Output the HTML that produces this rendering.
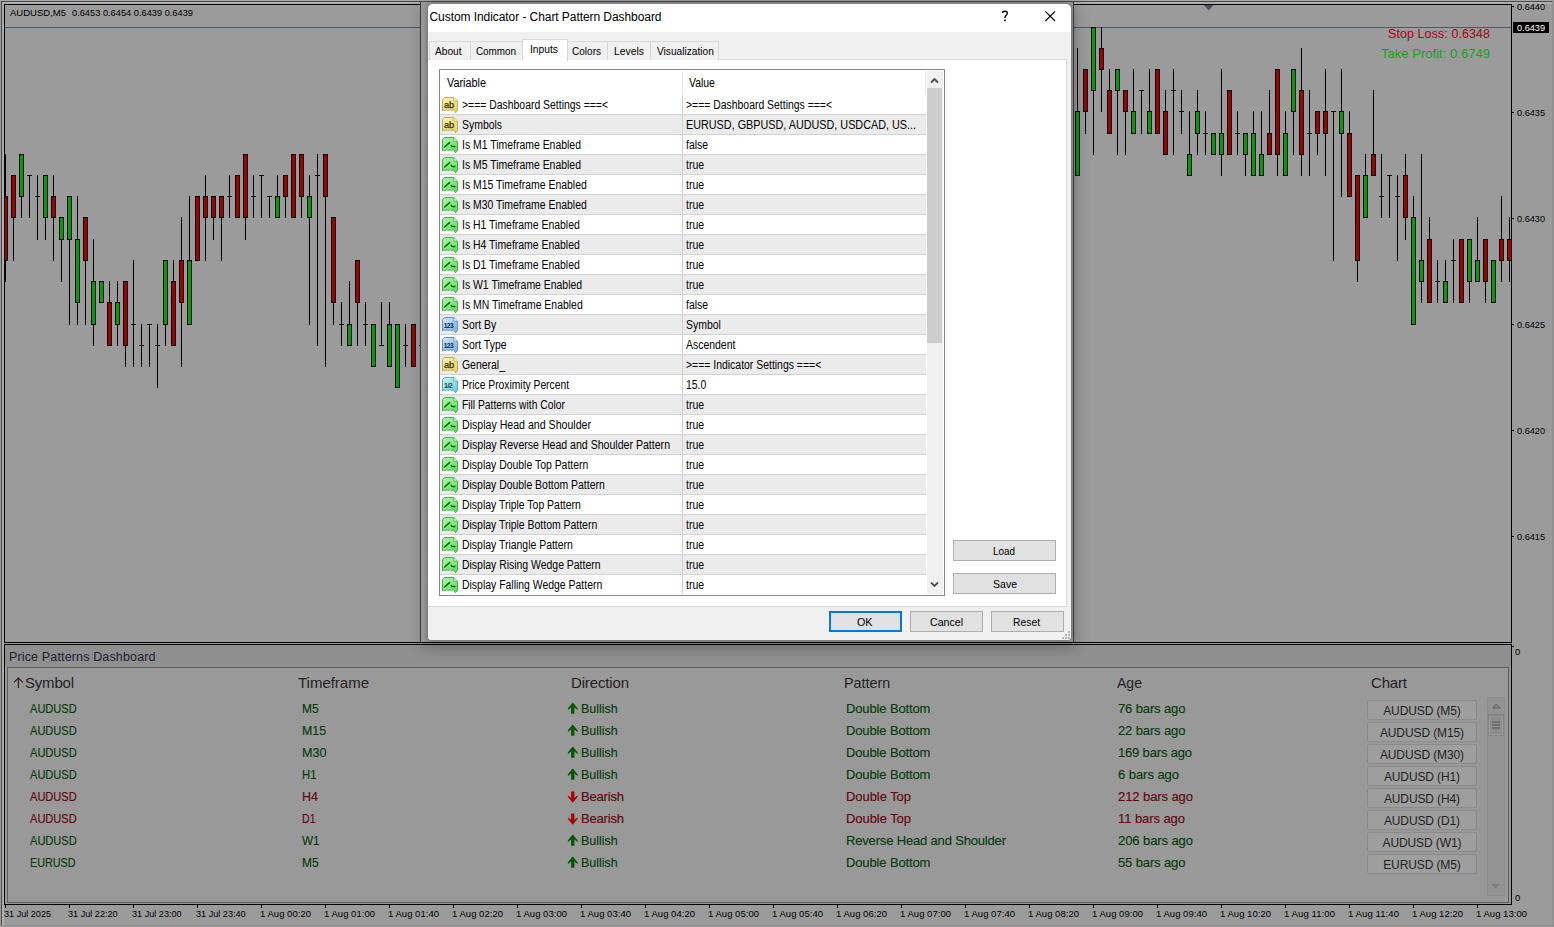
<!DOCTYPE html>
<html><head><meta charset="utf-8"><style>
html,body{margin:0;padding:0}
body{width:1554px;height:927px;overflow:hidden;position:relative;background:#9b9b9b;font-family:"Liberation Sans",sans-serif}
.abs{position:absolute}
.t{position:absolute;white-space:pre}
.ic{position:absolute}
</style></head><body>
<svg width="0" height="0" style="position:absolute"><defs><linearGradient id="gab" x1="0" y1="0" x2="0.8" y2="1"><stop offset="0" stop-color="#fbf4b8"/><stop offset="1" stop-color="#e4d26c"/></linearGradient><linearGradient id="gbool" x1="0" y1="0" x2="0.8" y2="1"><stop offset="0" stop-color="#b6f5b6"/><stop offset="1" stop-color="#5cdc5c"/></linearGradient><linearGradient id="gnum" x1="0" y1="0" x2="0.8" y2="1"><stop offset="0" stop-color="#d4e9fb"/><stop offset="1" stop-color="#7db2e6"/></linearGradient><linearGradient id="ghalf" x1="0" y1="0" x2="0.8" y2="1"><stop offset="0" stop-color="#d2f4f8"/><stop offset="1" stop-color="#70ccd8"/></linearGradient></defs></svg>
<!-- outer frame -->
<div class="abs" style="left:0;top:0;width:1554px;height:1px;background:#a8a8a8"></div>
<div class="abs" style="left:1px;top:1px;width:1551px;height:1px;background:#4a4a4a"></div>
<div class="abs" style="left:1px;top:1px;width:1px;height:924px;background:#4a4a4a"></div>
<div class="abs" style="left:2px;top:2px;width:1550px;height:2px;background:#adadad"></div>
<div class="abs" style="left:2px;top:2px;width:2px;height:923px;background:#adadad"></div>
<div class="abs" style="left:0;top:925px;width:1554px;height:1px;background:#8e8e8e"></div>
<div class="abs" style="left:1552px;top:0;width:1px;height:927px;background:#8e8e8e"></div>

<!-- main chart border -->
<div class="abs" style="left:4px;top:4px;width:1506px;height:637px;border:1px solid #000"></div>
<div class="abs" style="left:5px;top:27px;width:1506px;height:1px;background:#4d5864"></div>
<svg class="abs" style="left:1204px;top:5px" width="10" height="6"><path d="M0 0 L9.5 0 L4.75 5.5 Z" fill="#4a535c"/></svg>
<svg class="abs" style="left:0;top:0" width="1554" height="927"><defs><clipPath id="cc"><rect x="5" y="5" width="1506" height="637"/></clipPath></defs><g clip-path="url(#cc)" fill="#000"><rect x="5" y="154" width="1" height="128"/><rect x="3" y="196" width="5" height="65"/><rect x="4" y="197" width="3" height="63" fill="#a00000"/><rect x="13" y="175" width="1" height="86"/><rect x="11" y="175" width="5" height="43"/><rect x="12" y="176" width="3" height="41" fill="#a00000"/><rect x="21" y="154" width="1" height="64"/><rect x="19" y="154" width="5" height="43"/><rect x="20" y="155" width="3" height="41" fill="#00a000"/><rect x="29" y="175" width="1" height="43"/><rect x="27" y="175" width="5" height="1"/><rect x="37" y="175" width="1" height="65"/><rect x="35" y="196" width="5" height="1"/><rect x="45" y="175" width="1" height="65"/><rect x="43" y="175" width="5" height="43"/><rect x="44" y="176" width="3" height="41" fill="#00a000"/><rect x="53" y="175" width="1" height="86"/><rect x="51" y="196" width="5" height="22"/><rect x="52" y="197" width="3" height="20" fill="#a00000"/><rect x="61" y="217" width="1" height="65"/><rect x="59" y="217" width="5" height="23"/><rect x="60" y="218" width="3" height="21" fill="#00a000"/><rect x="69" y="196" width="1" height="129"/><rect x="67" y="196" width="5" height="44"/><rect x="68" y="197" width="3" height="42" fill="#00a000"/><rect x="77" y="196" width="1" height="129"/><rect x="75" y="239" width="5" height="64"/><rect x="76" y="240" width="3" height="62" fill="#00a000"/><rect x="85" y="217" width="1" height="108"/><rect x="83" y="217" width="5" height="44"/><rect x="84" y="218" width="3" height="42" fill="#a00000"/><rect x="93" y="239" width="1" height="107"/><rect x="91" y="281" width="5" height="44"/><rect x="92" y="282" width="3" height="42" fill="#00a000"/><rect x="101" y="281" width="1" height="22"/><rect x="99" y="281" width="5" height="22"/><rect x="100" y="282" width="3" height="20" fill="#00a000"/><rect x="109" y="281" width="1" height="65"/><rect x="107" y="302" width="5" height="44"/><rect x="108" y="303" width="3" height="42" fill="#a00000"/><rect x="117" y="281" width="1" height="65"/><rect x="115" y="302" width="5" height="23"/><rect x="116" y="303" width="3" height="21" fill="#00a000"/><rect x="125" y="281" width="1" height="86"/><rect x="123" y="281" width="5" height="65"/><rect x="124" y="282" width="3" height="63" fill="#a00000"/><rect x="133" y="260" width="1" height="107"/><rect x="131" y="324" width="5" height="1"/><rect x="141" y="324" width="1" height="43"/><rect x="139" y="345" width="5" height="1"/><rect x="149" y="324" width="1" height="43"/><rect x="147" y="324" width="5" height="1"/><rect x="157" y="324" width="1" height="64"/><rect x="155" y="345" width="5" height="1"/><rect x="165" y="260" width="1" height="86"/><rect x="163" y="260" width="5" height="65"/><rect x="164" y="261" width="3" height="63" fill="#00a000"/><rect x="173" y="260" width="1" height="86"/><rect x="171" y="281" width="5" height="65"/><rect x="172" y="282" width="3" height="63" fill="#a00000"/><rect x="181" y="217" width="1" height="150"/><rect x="179" y="260" width="5" height="43"/><rect x="180" y="261" width="3" height="41" fill="#a00000"/><rect x="189" y="196" width="1" height="129"/><rect x="187" y="260" width="5" height="65"/><rect x="188" y="261" width="3" height="63" fill="#00a000"/><rect x="197" y="196" width="1" height="65"/><rect x="195" y="196" width="5" height="65"/><rect x="196" y="197" width="3" height="63" fill="#a00000"/><rect x="205" y="175" width="1" height="86"/><rect x="203" y="196" width="5" height="22"/><rect x="204" y="197" width="3" height="20" fill="#a00000"/><rect x="213" y="196" width="1" height="44"/><rect x="211" y="196" width="5" height="22"/><rect x="212" y="197" width="3" height="20" fill="#a00000"/><rect x="221" y="196" width="1" height="65"/><rect x="219" y="196" width="5" height="22"/><rect x="220" y="197" width="3" height="20" fill="#a00000"/><rect x="229" y="175" width="1" height="43"/><rect x="227" y="196" width="5" height="1"/><rect x="237" y="175" width="1" height="43"/><rect x="235" y="175" width="5" height="43"/><rect x="236" y="176" width="3" height="41" fill="#a00000"/><rect x="245" y="154" width="1" height="86"/><rect x="243" y="154" width="5" height="64"/><rect x="244" y="155" width="3" height="62" fill="#a00000"/><rect x="253" y="175" width="1" height="43"/><rect x="251" y="196" width="5" height="1"/><rect x="261" y="175" width="1" height="43"/><rect x="259" y="175" width="5" height="1"/><rect x="269" y="196" width="1" height="22"/><rect x="267" y="196" width="5" height="1"/><rect x="277" y="175" width="1" height="43"/><rect x="275" y="196" width="5" height="22"/><rect x="276" y="197" width="3" height="20" fill="#00a000"/><rect x="285" y="175" width="1" height="43"/><rect x="283" y="175" width="5" height="22"/><rect x="284" y="176" width="3" height="20" fill="#a00000"/><rect x="293" y="154" width="1" height="64"/><rect x="291" y="154" width="5" height="64"/><rect x="292" y="155" width="3" height="62" fill="#a00000"/><rect x="301" y="154" width="1" height="64"/><rect x="299" y="154" width="5" height="43"/><rect x="300" y="155" width="3" height="41" fill="#a00000"/><rect x="309" y="175" width="1" height="150"/><rect x="307" y="196" width="5" height="22"/><rect x="308" y="197" width="3" height="20" fill="#00a000"/><rect x="317" y="154" width="1" height="192"/><rect x="315" y="175" width="5" height="1"/><rect x="325" y="154" width="1" height="213"/><rect x="323" y="154" width="5" height="43"/><rect x="324" y="155" width="3" height="41" fill="#a00000"/><rect x="333" y="217" width="1" height="108"/><rect x="331" y="217" width="5" height="86"/><rect x="332" y="218" width="3" height="84" fill="#a00000"/><rect x="341" y="302" width="1" height="44"/><rect x="339" y="324" width="5" height="1"/><rect x="349" y="281" width="1" height="65"/><rect x="347" y="324" width="5" height="22"/><rect x="348" y="325" width="3" height="20" fill="#00a000"/><rect x="357" y="260" width="1" height="86"/><rect x="355" y="260" width="5" height="43"/><rect x="356" y="261" width="3" height="41" fill="#a00000"/><rect x="365" y="302" width="1" height="44"/><rect x="363" y="324" width="5" height="1"/><rect x="373" y="324" width="1" height="43"/><rect x="371" y="324" width="5" height="43"/><rect x="372" y="325" width="3" height="41" fill="#00a000"/><rect x="381" y="302" width="1" height="44"/><rect x="379" y="345" width="5" height="1"/><rect x="389" y="302" width="1" height="65"/><rect x="387" y="324" width="5" height="43"/><rect x="388" y="325" width="3" height="41" fill="#00a000"/><rect x="397" y="324" width="1" height="64"/><rect x="395" y="324" width="5" height="64"/><rect x="396" y="325" width="3" height="62" fill="#00a000"/><rect x="405" y="324" width="1" height="43"/><rect x="403" y="345" width="5" height="1"/><rect x="413" y="324" width="1" height="43"/><rect x="411" y="324" width="5" height="43"/><rect x="412" y="325" width="3" height="41" fill="#a00000"/><rect x="421" y="324" width="1" height="43"/><rect x="419" y="345" width="5" height="1"/><rect x="1077" y="48" width="1" height="128"/><rect x="1075" y="111" width="5" height="65"/><rect x="1076" y="112" width="3" height="63" fill="#00a000"/><rect x="1085" y="69" width="1" height="65"/><rect x="1083" y="69" width="5" height="43"/><rect x="1084" y="70" width="3" height="41" fill="#a00000"/><rect x="1093" y="27" width="1" height="128"/><rect x="1091" y="27" width="5" height="64"/><rect x="1092" y="28" width="3" height="62" fill="#00a000"/><rect x="1101" y="27" width="1" height="85"/><rect x="1099" y="48" width="5" height="22"/><rect x="1100" y="49" width="3" height="20" fill="#a00000"/><rect x="1109" y="69" width="1" height="65"/><rect x="1107" y="90" width="5" height="44"/><rect x="1108" y="91" width="3" height="42" fill="#a00000"/><rect x="1117" y="69" width="1" height="86"/><rect x="1115" y="69" width="5" height="22"/><rect x="1116" y="70" width="3" height="20" fill="#00a000"/><rect x="1125" y="90" width="1" height="65"/><rect x="1123" y="90" width="5" height="22"/><rect x="1124" y="91" width="3" height="20" fill="#a00000"/><rect x="1133" y="69" width="1" height="65"/><rect x="1131" y="111" width="5" height="23"/><rect x="1132" y="112" width="3" height="21" fill="#00a000"/><rect x="1141" y="90" width="1" height="44"/><rect x="1139" y="90" width="5" height="1"/><rect x="1149" y="69" width="1" height="65"/><rect x="1147" y="111" width="5" height="23"/><rect x="1148" y="112" width="3" height="21" fill="#00a000"/><rect x="1157" y="69" width="1" height="65"/><rect x="1155" y="69" width="5" height="65"/><rect x="1156" y="70" width="3" height="63" fill="#a00000"/><rect x="1165" y="90" width="1" height="65"/><rect x="1163" y="111" width="5" height="44"/><rect x="1164" y="112" width="3" height="42" fill="#a00000"/><rect x="1173" y="69" width="1" height="86"/><rect x="1171" y="90" width="5" height="1"/><rect x="1181" y="90" width="1" height="44"/><rect x="1179" y="111" width="5" height="1"/><rect x="1189" y="111" width="1" height="65"/><rect x="1187" y="154" width="5" height="22"/><rect x="1188" y="155" width="3" height="20" fill="#00a000"/><rect x="1197" y="90" width="1" height="65"/><rect x="1195" y="111" width="5" height="23"/><rect x="1196" y="112" width="3" height="21" fill="#00a000"/><rect x="1205" y="111" width="1" height="44"/><rect x="1203" y="133" width="5" height="1"/><rect x="1213" y="133" width="1" height="22"/><rect x="1211" y="133" width="5" height="22"/><rect x="1212" y="134" width="3" height="20" fill="#00a000"/><rect x="1221" y="69" width="1" height="107"/><rect x="1219" y="133" width="5" height="22"/><rect x="1220" y="134" width="3" height="20" fill="#00a000"/><rect x="1229" y="90" width="1" height="65"/><rect x="1227" y="90" width="5" height="65"/><rect x="1228" y="91" width="3" height="63" fill="#a00000"/><rect x="1237" y="111" width="1" height="44"/><rect x="1235" y="133" width="5" height="1"/><rect x="1245" y="133" width="1" height="43"/><rect x="1243" y="133" width="5" height="22"/><rect x="1244" y="134" width="3" height="20" fill="#00a000"/><rect x="1253" y="111" width="1" height="65"/><rect x="1251" y="133" width="5" height="43"/><rect x="1252" y="134" width="3" height="41" fill="#00a000"/><rect x="1261" y="111" width="1" height="65"/><rect x="1259" y="154" width="5" height="22"/><rect x="1260" y="155" width="3" height="20" fill="#00a000"/><rect x="1269" y="90" width="1" height="65"/><rect x="1267" y="133" width="5" height="22"/><rect x="1268" y="134" width="3" height="20" fill="#a00000"/><rect x="1277" y="69" width="1" height="107"/><rect x="1275" y="69" width="5" height="86"/><rect x="1276" y="70" width="3" height="84" fill="#a00000"/><rect x="1285" y="111" width="1" height="65"/><rect x="1283" y="133" width="5" height="43"/><rect x="1284" y="134" width="3" height="41" fill="#00a000"/><rect x="1293" y="69" width="1" height="86"/><rect x="1291" y="69" width="5" height="43"/><rect x="1292" y="70" width="3" height="41" fill="#00a000"/><rect x="1301" y="48" width="1" height="128"/><rect x="1299" y="90" width="5" height="65"/><rect x="1300" y="91" width="3" height="63" fill="#a00000"/><rect x="1309" y="90" width="1" height="86"/><rect x="1307" y="133" width="5" height="1"/><rect x="1317" y="111" width="1" height="44"/><rect x="1315" y="111" width="5" height="23"/><rect x="1316" y="112" width="3" height="21" fill="#a00000"/><rect x="1325" y="69" width="1" height="107"/><rect x="1323" y="111" width="5" height="23"/><rect x="1324" y="112" width="3" height="21" fill="#a00000"/><rect x="1333" y="111" width="1" height="150"/><rect x="1331" y="111" width="5" height="1"/><rect x="1341" y="69" width="1" height="128"/><rect x="1339" y="111" width="5" height="23"/><rect x="1340" y="112" width="3" height="21" fill="#00a000"/><rect x="1349" y="111" width="1" height="86"/><rect x="1347" y="133" width="5" height="64"/><rect x="1348" y="134" width="3" height="62" fill="#a00000"/><rect x="1357" y="175" width="1" height="107"/><rect x="1355" y="175" width="5" height="86"/><rect x="1356" y="176" width="3" height="84" fill="#a00000"/><rect x="1365" y="154" width="1" height="64"/><rect x="1363" y="175" width="5" height="43"/><rect x="1364" y="176" width="3" height="41" fill="#00a000"/><rect x="1373" y="90" width="1" height="86"/><rect x="1371" y="154" width="5" height="22"/><rect x="1372" y="155" width="3" height="20" fill="#a00000"/><rect x="1381" y="154" width="1" height="64"/><rect x="1379" y="196" width="5" height="1"/><rect x="1389" y="175" width="1" height="43"/><rect x="1387" y="175" width="5" height="1"/><rect x="1397" y="175" width="1" height="86"/><rect x="1395" y="196" width="5" height="1"/><rect x="1405" y="154" width="1" height="86"/><rect x="1403" y="175" width="5" height="43"/><rect x="1404" y="176" width="3" height="41" fill="#a00000"/><rect x="1413" y="196" width="1" height="129"/><rect x="1411" y="217" width="5" height="108"/><rect x="1412" y="218" width="3" height="106" fill="#00a000"/><rect x="1421" y="154" width="1" height="149"/><rect x="1419" y="260" width="5" height="22"/><rect x="1420" y="261" width="3" height="20" fill="#00a000"/><rect x="1429" y="217" width="1" height="86"/><rect x="1427" y="239" width="5" height="64"/><rect x="1428" y="240" width="3" height="62" fill="#a00000"/><rect x="1437" y="260" width="1" height="43"/><rect x="1435" y="281" width="5" height="1"/><rect x="1445" y="260" width="1" height="43"/><rect x="1443" y="281" width="5" height="22"/><rect x="1444" y="282" width="3" height="20" fill="#00a000"/><rect x="1453" y="239" width="1" height="64"/><rect x="1451" y="260" width="5" height="1"/><rect x="1461" y="239" width="1" height="64"/><rect x="1459" y="239" width="5" height="64"/><rect x="1460" y="240" width="3" height="62" fill="#a00000"/><rect x="1469" y="239" width="1" height="64"/><rect x="1467" y="239" width="5" height="43"/><rect x="1468" y="240" width="3" height="41" fill="#00a000"/><rect x="1477" y="217" width="1" height="65"/><rect x="1475" y="260" width="5" height="22"/><rect x="1476" y="261" width="3" height="20" fill="#00a000"/><rect x="1485" y="239" width="1" height="64"/><rect x="1483" y="239" width="5" height="43"/><rect x="1484" y="240" width="3" height="41" fill="#a00000"/><rect x="1493" y="260" width="1" height="43"/><rect x="1491" y="260" width="5" height="43"/><rect x="1492" y="261" width="3" height="41" fill="#00a000"/><rect x="1501" y="196" width="1" height="86"/><rect x="1499" y="239" width="5" height="22"/><rect x="1500" y="240" width="3" height="20" fill="#a00000"/><rect x="1509" y="217" width="1" height="65"/><rect x="1507" y="239" width="5" height="22"/><rect x="1508" y="240" width="3" height="20" fill="#a00000"/></g></svg>

<div class="t " style="left:10.00px;top:6.60px;font-size:9.8px;line-height:12px;letter-spacing:0.000px;color:#000;transform:scaleX(0.9702);transform-origin:0 0;">AUDUSD,M5</div>
<div class="t " style="left:72.00px;top:6.60px;font-size:9.8px;line-height:12px;letter-spacing:0.000px;color:#000;transform:scaleX(0.9448);transform-origin:0 0;">0.6453 0.6454 0.6439 0.6439</div>
<div class="t " style="left:1388.00px;top:27.17px;font-size:12.5px;line-height:15px;letter-spacing:0.077px;color:#ad0014;">Stop Loss: 0.6348</div>
<div class="t " style="left:1381.00px;top:47.17px;font-size:12.5px;line-height:15px;letter-spacing:0.000px;color:#1aa01a;transform:scaleX(1.0458);transform-origin:0 0;">Take Profit: 0.6749</div>

<!-- price axis -->
<div class="abs" style="left:1512px;top:6px;width:2px;height:1px;background:#000"></div><div class="t ax" style="left:1517.00px;top:0.71px;font-size:9.5px;line-height:12px;letter-spacing:0.000px;color:#000;transform:scaleX(0.9636);transform-origin:0 0;">0.6440</div><div class="abs" style="left:1512px;top:112px;width:2px;height:1px;background:#000"></div><div class="t ax" style="left:1517.00px;top:106.71px;font-size:9.5px;line-height:12px;letter-spacing:0.000px;color:#000;transform:scaleX(0.9636);transform-origin:0 0;">0.6435</div><div class="abs" style="left:1512px;top:218px;width:2px;height:1px;background:#000"></div><div class="t ax" style="left:1517.00px;top:212.71px;font-size:9.5px;line-height:12px;letter-spacing:0.000px;color:#000;transform:scaleX(0.9636);transform-origin:0 0;">0.6430</div><div class="abs" style="left:1512px;top:324px;width:2px;height:1px;background:#000"></div><div class="t ax" style="left:1517.00px;top:318.71px;font-size:9.5px;line-height:12px;letter-spacing:0.000px;color:#000;transform:scaleX(0.9636);transform-origin:0 0;">0.6425</div><div class="abs" style="left:1512px;top:430px;width:2px;height:1px;background:#000"></div><div class="t ax" style="left:1517.00px;top:424.71px;font-size:9.5px;line-height:12px;letter-spacing:0.000px;color:#000;transform:scaleX(0.9636);transform-origin:0 0;">0.6420</div><div class="abs" style="left:1512px;top:536px;width:2px;height:1px;background:#000"></div><div class="t ax" style="left:1517.00px;top:530.71px;font-size:9.5px;line-height:12px;letter-spacing:0.000px;color:#000;transform:scaleX(0.9636);transform-origin:0 0;">0.6415</div>
<div class="abs" style="left:1513px;top:22px;width:36px;height:11px;background:#000"></div>
<div class="t " style="left:1517.00px;top:21.71px;font-size:9.5px;line-height:12px;letter-spacing:0.000px;color:#fff;transform:scaleX(0.9636);transform-origin:0 0;">0.6439</div>

<!-- subwindow -->
<div class="abs" style="left:4px;top:644px;width:1506px;height:259px;border:1px solid #000;background:#999"></div>
<div class="abs" style="left:5px;top:645px;width:1506px;height:22px;background:#8f8f8f"></div>
<div class="t " style="left:9.00px;top:649.67px;font-size:12.5px;line-height:15px;letter-spacing:0.147px;color:#221c2c;">Price Patterns Dashboard</div>
<div class="abs" style="left:7px;top:667px;width:1500px;height:234px;border:1px solid #5c5c5c;background:#999"></div>
<svg class="abs" style="left:13px;top:677px" width="11" height="12"><path d="M5.4 11 L5.4 1.2 M1 5.4 L5.4 1 L9.8 5.4" stroke="#2a2020" stroke-width="1.15" fill="none"/></svg>
<div class="t " style="left:25.00px;top:673.80px;font-size:15px;line-height:18px;letter-spacing:-0.203px;color:#261e22;">Symbol</div>
<div class="t " style="left:298.00px;top:673.80px;font-size:15px;line-height:18px;letter-spacing:-0.015px;color:#261e22;">Timeframe</div>
<div class="t " style="left:571.00px;top:673.80px;font-size:15px;line-height:18px;letter-spacing:-0.148px;color:#261e22;">Direction</div>
<div class="t " style="left:844.00px;top:673.80px;font-size:15px;line-height:18px;letter-spacing:0.000px;color:#261e22;transform:scaleX(0.9574);transform-origin:0 0;">Pattern</div>
<div class="t " style="left:1117.00px;top:673.80px;font-size:15px;line-height:18px;letter-spacing:0.000px;color:#261e22;transform:scaleX(0.9367);transform-origin:0 0;">Age</div>
<div class="t " style="left:1371.00px;top:673.80px;font-size:15px;line-height:18px;letter-spacing:-0.170px;color:#261e22;">Chart</div>
<div class="t " style="left:30.00px;top:700.50px;font-size:13px;line-height:16px;letter-spacing:0.000px;color:#083a0c;transform:scaleX(0.8507);transform-origin:0 0;-webkit-text-stroke:0.15px #083a0c">AUDUSD</div><div class="t " style="left:302.00px;top:700.50px;font-size:13px;line-height:16px;letter-spacing:0.000px;color:#083a0c;transform:scaleX(0.9192);transform-origin:0 0;-webkit-text-stroke:0.15px #083a0c">M5</div><div class="t " style="left:581.00px;top:700.50px;font-size:13px;line-height:16px;letter-spacing:0.000px;color:#083a0c;transform:scaleX(0.9583);transform-origin:0 0;-webkit-text-stroke:0.15px #083a0c">Bullish</div><div class="t " style="left:846.00px;top:700.50px;font-size:13px;line-height:16px;letter-spacing:-0.133px;color:#083a0c;-webkit-text-stroke:0.15px #083a0c">Double Bottom</div><div class="t " style="left:1118.00px;top:700.50px;font-size:13px;line-height:16px;letter-spacing:-0.126px;color:#083a0c;-webkit-text-stroke:0.15px #083a0c">76 bars ago</div><svg class="abs" width="12" height="13" style="left:567px;top:702px"><path d="M5.75 0.6 L10.6 6.3 L10.6 8 L7.4 5.6 L7.4 11.8 L4.1 11.8 L4.1 5.6 L0.9 8 L0.9 6.3 Z" fill="#005800"/></svg><div class="abs" style="left:1367px;top:700px;width:108px;height:18px;border:1px solid #8a8a8a;background:#9e9e9e;border-radius:2px"></div><div class="t " style="left:1383.22px;top:704.34px;font-size:12px;line-height:15px;letter-spacing:-0.110px;color:#1e1e22;">AUDUSD (M5)</div><div class="t " style="left:30.00px;top:722.50px;font-size:13px;line-height:16px;letter-spacing:0.000px;color:#083a0c;transform:scaleX(0.8507);transform-origin:0 0;-webkit-text-stroke:0.15px #083a0c">AUDUSD</div><div class="t " style="left:302.00px;top:722.50px;font-size:13px;line-height:16px;letter-spacing:0.000px;color:#083a0c;transform:scaleX(0.9490);transform-origin:0 0;-webkit-text-stroke:0.15px #083a0c">M15</div><div class="t " style="left:581.00px;top:722.50px;font-size:13px;line-height:16px;letter-spacing:0.000px;color:#083a0c;transform:scaleX(0.9583);transform-origin:0 0;-webkit-text-stroke:0.15px #083a0c">Bullish</div><div class="t " style="left:846.00px;top:722.50px;font-size:13px;line-height:16px;letter-spacing:-0.133px;color:#083a0c;-webkit-text-stroke:0.15px #083a0c">Double Bottom</div><div class="t " style="left:1118.00px;top:722.50px;font-size:13px;line-height:16px;letter-spacing:-0.126px;color:#083a0c;-webkit-text-stroke:0.15px #083a0c">22 bars ago</div><svg class="abs" width="12" height="13" style="left:567px;top:724px"><path d="M5.75 0.6 L10.6 6.3 L10.6 8 L7.4 5.6 L7.4 11.8 L4.1 11.8 L4.1 5.6 L0.9 8 L0.9 6.3 Z" fill="#005800"/></svg><div class="abs" style="left:1367px;top:722px;width:108px;height:18px;border:1px solid #8a8a8a;background:#9e9e9e;border-radius:2px"></div><div class="t " style="left:1379.93px;top:726.34px;font-size:12px;line-height:15px;letter-spacing:-0.110px;color:#1e1e22;">AUDUSD (M15)</div><div class="t " style="left:30.00px;top:744.50px;font-size:13px;line-height:16px;letter-spacing:0.000px;color:#083a0c;transform:scaleX(0.8507);transform-origin:0 0;-webkit-text-stroke:0.15px #083a0c">AUDUSD</div><div class="t " style="left:302.00px;top:744.50px;font-size:13px;line-height:16px;letter-spacing:0.000px;color:#083a0c;transform:scaleX(0.9688);transform-origin:0 0;-webkit-text-stroke:0.15px #083a0c">M30</div><div class="t " style="left:581.00px;top:744.50px;font-size:13px;line-height:16px;letter-spacing:0.000px;color:#083a0c;transform:scaleX(0.9583);transform-origin:0 0;-webkit-text-stroke:0.15px #083a0c">Bullish</div><div class="t " style="left:846.00px;top:744.50px;font-size:13px;line-height:16px;letter-spacing:-0.133px;color:#083a0c;-webkit-text-stroke:0.15px #083a0c">Double Bottom</div><div class="t " style="left:1118.00px;top:744.50px;font-size:13px;line-height:16px;letter-spacing:-0.172px;color:#083a0c;-webkit-text-stroke:0.15px #083a0c">169 bars ago</div><svg class="abs" width="12" height="13" style="left:567px;top:746px"><path d="M5.75 0.6 L10.6 6.3 L10.6 8 L7.4 5.6 L7.4 11.8 L4.1 11.8 L4.1 5.6 L0.9 8 L0.9 6.3 Z" fill="#005800"/></svg><div class="abs" style="left:1367px;top:744px;width:108px;height:18px;border:1px solid #8a8a8a;background:#9e9e9e;border-radius:2px"></div><div class="t " style="left:1379.93px;top:748.34px;font-size:12px;line-height:15px;letter-spacing:-0.110px;color:#1e1e22;">AUDUSD (M30)</div><div class="t " style="left:30.00px;top:766.50px;font-size:13px;line-height:16px;letter-spacing:0.000px;color:#083a0c;transform:scaleX(0.8507);transform-origin:0 0;-webkit-text-stroke:0.15px #083a0c">AUDUSD</div><div class="t " style="left:302.00px;top:766.50px;font-size:13px;line-height:16px;letter-spacing:0.000px;color:#083a0c;transform:scaleX(0.8665);transform-origin:0 0;-webkit-text-stroke:0.15px #083a0c">H1</div><div class="t " style="left:581.00px;top:766.50px;font-size:13px;line-height:16px;letter-spacing:0.000px;color:#083a0c;transform:scaleX(0.9583);transform-origin:0 0;-webkit-text-stroke:0.15px #083a0c">Bullish</div><div class="t " style="left:846.00px;top:766.50px;font-size:13px;line-height:16px;letter-spacing:-0.133px;color:#083a0c;-webkit-text-stroke:0.15px #083a0c">Double Bottom</div><div class="t " style="left:1118.00px;top:766.50px;font-size:13px;line-height:16px;letter-spacing:-0.048px;color:#083a0c;-webkit-text-stroke:0.15px #083a0c">6 bars ago</div><svg class="abs" width="12" height="13" style="left:567px;top:768px"><path d="M5.75 0.6 L10.6 6.3 L10.6 8 L7.4 5.6 L7.4 11.8 L4.1 11.8 L4.1 5.6 L0.9 8 L0.9 6.3 Z" fill="#005800"/></svg><div class="abs" style="left:1367px;top:766px;width:108px;height:18px;border:1px solid #8a8a8a;background:#9e9e9e;border-radius:2px"></div><div class="t " style="left:1383.88px;top:770.34px;font-size:12px;line-height:15px;letter-spacing:-0.110px;color:#1e1e22;">AUDUSD (H1)</div><div class="t " style="left:30.00px;top:788.50px;font-size:13px;line-height:16px;letter-spacing:0.000px;color:#600610;transform:scaleX(0.8507);transform-origin:0 0;-webkit-text-stroke:0.15px #600610">AUDUSD</div><div class="t " style="left:302.00px;top:788.50px;font-size:13px;line-height:16px;letter-spacing:0.000px;color:#600610;transform:scaleX(0.9628);transform-origin:0 0;-webkit-text-stroke:0.15px #600610">H4</div><div class="t " style="left:581.00px;top:788.50px;font-size:13px;line-height:16px;letter-spacing:-0.180px;color:#600610;-webkit-text-stroke:0.15px #600610">Bearish</div><div class="t " style="left:846.00px;top:788.50px;font-size:13px;line-height:16px;letter-spacing:-0.059px;color:#600610;-webkit-text-stroke:0.15px #600610">Double Top</div><div class="t " style="left:1118.00px;top:788.50px;font-size:13px;line-height:16px;letter-spacing:-0.081px;color:#600610;-webkit-text-stroke:0.15px #600610">212 bars ago</div><svg class="abs" width="12" height="13" style="left:567px;top:791px"><path d="M5.75 11.8 L10.6 6.1 L10.6 4.4 L7.4 6.8 L7.4 0.6 L4.1 0.6 L4.1 6.8 L0.9 4.4 L0.9 6.1 Z" fill="#a80000"/></svg><div class="abs" style="left:1367px;top:788px;width:108px;height:18px;border:1px solid #8a8a8a;background:#9e9e9e;border-radius:2px"></div><div class="t " style="left:1383.88px;top:792.34px;font-size:12px;line-height:15px;letter-spacing:-0.110px;color:#1e1e22;">AUDUSD (H4)</div><div class="t " style="left:30.00px;top:810.50px;font-size:13px;line-height:16px;letter-spacing:0.000px;color:#600610;transform:scaleX(0.8507);transform-origin:0 0;-webkit-text-stroke:0.15px #600610">AUDUSD</div><div class="t " style="left:302.00px;top:810.50px;font-size:13px;line-height:16px;letter-spacing:0.000px;color:#600610;transform:scaleX(0.8124);transform-origin:0 0;-webkit-text-stroke:0.15px #600610">D1</div><div class="t " style="left:581.00px;top:810.50px;font-size:13px;line-height:16px;letter-spacing:-0.180px;color:#600610;-webkit-text-stroke:0.15px #600610">Bearish</div><div class="t " style="left:846.00px;top:810.50px;font-size:13px;line-height:16px;letter-spacing:-0.059px;color:#600610;-webkit-text-stroke:0.15px #600610">Double Top</div><div class="t " style="left:1118.00px;top:810.50px;font-size:13px;line-height:16px;letter-spacing:-0.070px;color:#600610;-webkit-text-stroke:0.15px #600610">11 bars ago</div><svg class="abs" width="12" height="13" style="left:567px;top:813px"><path d="M5.75 11.8 L10.6 6.1 L10.6 4.4 L7.4 6.8 L7.4 0.6 L4.1 0.6 L4.1 6.8 L0.9 4.4 L0.9 6.1 Z" fill="#a80000"/></svg><div class="abs" style="left:1367px;top:810px;width:108px;height:18px;border:1px solid #8a8a8a;background:#9e9e9e;border-radius:2px"></div><div class="t " style="left:1383.88px;top:814.34px;font-size:12px;line-height:15px;letter-spacing:-0.110px;color:#1e1e22;">AUDUSD (D1)</div><div class="t " style="left:30.00px;top:832.50px;font-size:13px;line-height:16px;letter-spacing:0.000px;color:#083a0c;transform:scaleX(0.8507);transform-origin:0 0;-webkit-text-stroke:0.15px #083a0c">AUDUSD</div><div class="t " style="left:302.00px;top:832.50px;font-size:13px;line-height:16px;letter-spacing:0.000px;color:#083a0c;transform:scaleX(0.9026);transform-origin:0 0;-webkit-text-stroke:0.15px #083a0c">W1</div><div class="t " style="left:581.00px;top:832.50px;font-size:13px;line-height:16px;letter-spacing:0.000px;color:#083a0c;transform:scaleX(0.9583);transform-origin:0 0;-webkit-text-stroke:0.15px #083a0c">Bullish</div><div class="t " style="left:846.00px;top:832.50px;font-size:13px;line-height:16px;letter-spacing:-0.169px;color:#083a0c;-webkit-text-stroke:0.15px #083a0c">Reverse Head and Shoulder</div><div class="t " style="left:1118.00px;top:832.50px;font-size:13px;line-height:16px;letter-spacing:-0.081px;color:#083a0c;-webkit-text-stroke:0.15px #083a0c">206 bars ago</div><svg class="abs" width="12" height="13" style="left:567px;top:834px"><path d="M5.75 0.6 L10.6 6.3 L10.6 8 L7.4 5.6 L7.4 11.8 L4.1 11.8 L4.1 5.6 L0.9 8 L0.9 6.3 Z" fill="#005800"/></svg><div class="abs" style="left:1367px;top:832px;width:108px;height:18px;border:1px solid #8a8a8a;background:#9e9e9e;border-radius:2px"></div><div class="t " style="left:1382.55px;top:836.34px;font-size:12px;line-height:15px;letter-spacing:-0.110px;color:#1e1e22;">AUDUSD (W1)</div><div class="t " style="left:30.00px;top:854.50px;font-size:13px;line-height:16px;letter-spacing:0.000px;color:#083a0c;transform:scaleX(0.8307);transform-origin:0 0;-webkit-text-stroke:0.15px #083a0c">EURUSD</div><div class="t " style="left:302.00px;top:854.50px;font-size:13px;line-height:16px;letter-spacing:0.000px;color:#083a0c;transform:scaleX(0.9192);transform-origin:0 0;-webkit-text-stroke:0.15px #083a0c">M5</div><div class="t " style="left:581.00px;top:854.50px;font-size:13px;line-height:16px;letter-spacing:0.000px;color:#083a0c;transform:scaleX(0.9583);transform-origin:0 0;-webkit-text-stroke:0.15px #083a0c">Bullish</div><div class="t " style="left:846.00px;top:854.50px;font-size:13px;line-height:16px;letter-spacing:-0.133px;color:#083a0c;-webkit-text-stroke:0.15px #083a0c">Double Bottom</div><div class="t " style="left:1118.00px;top:854.50px;font-size:13px;line-height:16px;letter-spacing:-0.126px;color:#083a0c;-webkit-text-stroke:0.15px #083a0c">55 bars ago</div><svg class="abs" width="12" height="13" style="left:567px;top:856px"><path d="M5.75 0.6 L10.6 6.3 L10.6 8 L7.4 5.6 L7.4 11.8 L4.1 11.8 L4.1 5.6 L0.9 8 L0.9 6.3 Z" fill="#005800"/></svg><div class="abs" style="left:1367px;top:854px;width:108px;height:18px;border:1px solid #8a8a8a;background:#9e9e9e;border-radius:2px"></div><div class="t " style="left:1383.22px;top:858.34px;font-size:12px;line-height:15px;letter-spacing:-0.110px;color:#1e1e22;">EURUSD (M5)</div>
<!-- dash scrollbar -->
<div class="abs" style="left:1487px;top:697px;width:16px;height:197px;border:1px solid #8c8c8c;background:#939393"></div>
<div class="abs" style="left:1487px;top:714px;width:18px;height:1px;background:#858585"></div>
<div class="abs" style="left:1488px;top:715px;width:16px;height:21px;background:#8d8d8d;border:1px solid #868686;box-sizing:border-box"></div>
<div class="abs" style="left:1489px;top:716px;width:14px;height:19px;border:1px solid #9a9a9a;box-sizing:border-box"></div>
<div class="abs" style="left:1492px;top:721px;width:8px;height:2px;background:#717171"></div>
<div class="abs" style="left:1492px;top:724px;width:8px;height:2px;background:#717171"></div>
<div class="abs" style="left:1492px;top:727px;width:8px;height:2px;background:#717171"></div>
<svg class="abs" style="left:1492px;top:703px" width="9" height="6"><path d="M0.8 5 L4.5 1.2 L8.2 5 Z" fill="#8a8a8a" stroke="#5e5e5e" stroke-width="1"/></svg>
<svg class="abs" style="left:1491px;top:884px" width="9" height="5"><path d="M0 0 L4.5 4.5 L9 0 Z" fill="#7c7c7c"/></svg>
<div class="t ax" style="left:1515.00px;top:645.71px;font-size:9.5px;line-height:12px;letter-spacing:0.000px;color:#000;">0</div>
<div class="abs" style="left:1512px;top:646px;width:2px;height:1px;background:#000"></div>
<div class="t ax" style="left:1515.00px;top:891.71px;font-size:9.5px;line-height:12px;letter-spacing:0.000px;color:#000;">0</div>

<!-- time axis -->
<div class="abs" style="left:5px;top:905px;width:1px;height:3px;background:#000"></div><div class="t ax" style="left:4.00px;top:907.71px;font-size:9.5px;line-height:12px;letter-spacing:0.000px;color:#000;transform:scaleX(0.9568);transform-origin:0 0;">31 Jul 2025</div><div class="abs" style="left:69px;top:905px;width:1px;height:3px;background:#000"></div><div class="t ax" style="left:68.00px;top:907.71px;font-size:9.5px;line-height:12px;letter-spacing:0.000px;color:#000;transform:scaleX(0.9582);transform-origin:0 0;">31 Jul 22:20</div><div class="abs" style="left:133px;top:905px;width:1px;height:3px;background:#000"></div><div class="t ax" style="left:132.00px;top:907.71px;font-size:9.5px;line-height:12px;letter-spacing:0.000px;color:#000;transform:scaleX(0.9582);transform-origin:0 0;">31 Jul 23:00</div><div class="abs" style="left:197px;top:905px;width:1px;height:3px;background:#000"></div><div class="t ax" style="left:196.00px;top:907.71px;font-size:9.5px;line-height:12px;letter-spacing:0.000px;color:#000;transform:scaleX(0.9582);transform-origin:0 0;">31 Jul 23:40</div><div class="abs" style="left:261px;top:905px;width:1px;height:3px;background:#000"></div><div class="t ax" style="left:260.00px;top:907.71px;font-size:9.5px;line-height:12px;letter-spacing:0.029px;color:#000;">1 Aug 00:20</div><div class="abs" style="left:325px;top:905px;width:1px;height:3px;background:#000"></div><div class="t ax" style="left:324.00px;top:907.71px;font-size:9.5px;line-height:12px;letter-spacing:0.029px;color:#000;">1 Aug 01:00</div><div class="abs" style="left:389px;top:905px;width:1px;height:3px;background:#000"></div><div class="t ax" style="left:388.00px;top:907.71px;font-size:9.5px;line-height:12px;letter-spacing:0.029px;color:#000;">1 Aug 01:40</div><div class="abs" style="left:453px;top:905px;width:1px;height:3px;background:#000"></div><div class="t ax" style="left:452.00px;top:907.71px;font-size:9.5px;line-height:12px;letter-spacing:0.029px;color:#000;">1 Aug 02:20</div><div class="abs" style="left:517px;top:905px;width:1px;height:3px;background:#000"></div><div class="t ax" style="left:516.00px;top:907.71px;font-size:9.5px;line-height:12px;letter-spacing:0.029px;color:#000;">1 Aug 03:00</div><div class="abs" style="left:581px;top:905px;width:1px;height:3px;background:#000"></div><div class="t ax" style="left:580.00px;top:907.71px;font-size:9.5px;line-height:12px;letter-spacing:0.029px;color:#000;">1 Aug 03:40</div><div class="abs" style="left:645px;top:905px;width:1px;height:3px;background:#000"></div><div class="t ax" style="left:644.00px;top:907.71px;font-size:9.5px;line-height:12px;letter-spacing:0.029px;color:#000;">1 Aug 04:20</div><div class="abs" style="left:709px;top:905px;width:1px;height:3px;background:#000"></div><div class="t ax" style="left:708.00px;top:907.71px;font-size:9.5px;line-height:12px;letter-spacing:0.029px;color:#000;">1 Aug 05:00</div><div class="abs" style="left:773px;top:905px;width:1px;height:3px;background:#000"></div><div class="t ax" style="left:772.00px;top:907.71px;font-size:9.5px;line-height:12px;letter-spacing:0.029px;color:#000;">1 Aug 05:40</div><div class="abs" style="left:837px;top:905px;width:1px;height:3px;background:#000"></div><div class="t ax" style="left:836.00px;top:907.71px;font-size:9.5px;line-height:12px;letter-spacing:0.029px;color:#000;">1 Aug 06:20</div><div class="abs" style="left:901px;top:905px;width:1px;height:3px;background:#000"></div><div class="t ax" style="left:900.00px;top:907.71px;font-size:9.5px;line-height:12px;letter-spacing:0.029px;color:#000;">1 Aug 07:00</div><div class="abs" style="left:965px;top:905px;width:1px;height:3px;background:#000"></div><div class="t ax" style="left:964.00px;top:907.71px;font-size:9.5px;line-height:12px;letter-spacing:0.029px;color:#000;">1 Aug 07:40</div><div class="abs" style="left:1029px;top:905px;width:1px;height:3px;background:#000"></div><div class="t ax" style="left:1028.00px;top:907.71px;font-size:9.5px;line-height:12px;letter-spacing:0.029px;color:#000;">1 Aug 08:20</div><div class="abs" style="left:1093px;top:905px;width:1px;height:3px;background:#000"></div><div class="t ax" style="left:1092.00px;top:907.71px;font-size:9.5px;line-height:12px;letter-spacing:0.029px;color:#000;">1 Aug 09:00</div><div class="abs" style="left:1157px;top:905px;width:1px;height:3px;background:#000"></div><div class="t ax" style="left:1156.00px;top:907.71px;font-size:9.5px;line-height:12px;letter-spacing:0.029px;color:#000;">1 Aug 09:40</div><div class="abs" style="left:1221px;top:905px;width:1px;height:3px;background:#000"></div><div class="t ax" style="left:1220.00px;top:907.71px;font-size:9.5px;line-height:12px;letter-spacing:0.029px;color:#000;">1 Aug 10:20</div><div class="abs" style="left:1285px;top:905px;width:1px;height:3px;background:#000"></div><div class="t ax" style="left:1284.00px;top:907.71px;font-size:9.5px;line-height:12px;letter-spacing:0.099px;color:#000;">1 Aug 11:00</div><div class="abs" style="left:1349px;top:905px;width:1px;height:3px;background:#000"></div><div class="t ax" style="left:1348.00px;top:907.71px;font-size:9.5px;line-height:12px;letter-spacing:0.099px;color:#000;">1 Aug 11:40</div><div class="abs" style="left:1413px;top:905px;width:1px;height:3px;background:#000"></div><div class="t ax" style="left:1412.00px;top:907.71px;font-size:9.5px;line-height:12px;letter-spacing:0.029px;color:#000;">1 Aug 12:20</div><div class="abs" style="left:1477px;top:905px;width:1px;height:3px;background:#000"></div><div class="t ax" style="left:1476.00px;top:907.71px;font-size:9.5px;line-height:12px;letter-spacing:0.029px;color:#000;">1 Aug 13:00</div>

<!-- dialog frame -->
<div class="abs" style="left:421px;top:2px;width:652px;height:640px;box-shadow:2px 5px 14px 1px rgba(0,0,0,0.24)"></div>
<div class="abs" style="left:420px;top:1px;width:1px;height:641px;background:#3c3c3c"></div>
<div class="abs" style="left:1073px;top:1px;width:1px;height:641px;background:#3c3c3c"></div>
<div class="abs" style="left:421px;top:2px;width:652px;height:640px;background:#989898"></div>
<div class="abs" style="left:428px;top:4px;width:643px;height:636px;background:#f0f0f0;border-radius:5px 5px 3px 3px;box-shadow:0 0 5px 1px rgba(0,0,0,0.28)"></div>
<div class="abs" style="left:428px;top:4px;width:643px;height:28px;background:#fff;border-radius:5px 5px 0 0"></div>
<div class="t " style="left:429.50px;top:10.34px;font-size:12px;line-height:15px;letter-spacing:-0.068px;color:#000;">Custom Indicator - Chart Pattern Dashboard</div>
<svg class="abs" style="left:1001px;top:10px" width="9" height="12"><path d="M1.6 3 Q1.6 1.2 3.9 1.2 Q6.3 1.2 6.3 3.3 Q6.3 4.6 4.9 5.6 Q3.9 6.4 3.9 7.9" stroke="#000" stroke-width="1.35" fill="none"/><rect x="3.1" y="9.6" width="1.7" height="1.5" fill="#000"/></svg>
<svg class="abs" style="left:1045px;top:11px" width="11" height="11"><path d="M0.4 0.4 L10 10 M10 0.4 L0.4 10" stroke="#000" stroke-width="1.15"/></svg>
<!-- tab panel -->
<div class="abs" style="left:428px;top:59px;width:638px;height:546px;background:#fff;border:1px solid #d9d9d9;border-left:none"></div>
<div class="abs" style="left:429px;top:41px;width:40px;height:18px;border:1px solid #d9d9d9;border-bottom:none;background:#f0f0f0"></div><div class="t " style="left:435.20px;top:44.02px;font-size:11.5px;line-height:14px;letter-spacing:0.000px;color:#000;transform:scaleX(0.8851);transform-origin:0 0;">About</div><div class="abs" style="left:470px;top:41px;width:51px;height:18px;border:1px solid #d9d9d9;border-bottom:none;background:#f0f0f0"></div><div class="t " style="left:476.40px;top:44.02px;font-size:11.5px;line-height:14px;letter-spacing:0.000px;color:#000;transform:scaleX(0.8574);transform-origin:0 0;">Common</div><div class="abs" style="left:522px;top:39px;width:44px;height:21px;border:1px solid #d9d9d9;border-bottom:none;background:#fff;z-index:3"></div><div class="t " style="left:530.00px;top:42.02px;font-size:11.5px;line-height:14px;letter-spacing:0.000px;color:#000;transform:scaleX(0.8938);transform-origin:0 0;z-index:4">Inputs</div><div class="abs" style="left:567px;top:41px;width:39px;height:18px;border:1px solid #d9d9d9;border-bottom:none;background:#f0f0f0"></div><div class="t " style="left:571.50px;top:44.02px;font-size:11.5px;line-height:14px;letter-spacing:0.000px;color:#000;transform:scaleX(0.8727);transform-origin:0 0;">Colors</div><div class="abs" style="left:607px;top:41px;width:42px;height:18px;border:1px solid #d9d9d9;border-bottom:none;background:#f0f0f0"></div><div class="t " style="left:614.00px;top:44.02px;font-size:11.5px;line-height:14px;letter-spacing:0.000px;color:#000;transform:scaleX(0.9025);transform-origin:0 0;">Levels</div><div class="abs" style="left:650px;top:41px;width:67px;height:18px;border:1px solid #d9d9d9;border-bottom:none;background:#f0f0f0"></div><div class="t " style="left:657.00px;top:44.02px;font-size:11.5px;line-height:14px;letter-spacing:0.000px;color:#000;transform:scaleX(0.8826);transform-origin:0 0;">Visualization</div>
<!-- grid -->
<div class="abs" style="left:439px;top:69px;width:504px;height:525px;border:1px solid #828790;background:#fff"></div>
<div class="t " style="left:447.00px;top:76.34px;font-size:12px;line-height:15px;letter-spacing:0.000px;color:#000;transform:scaleX(0.9041);transform-origin:0 0;">Variable</div>
<div class="t " style="left:689.00px;top:76.34px;font-size:12px;line-height:15px;letter-spacing:0.000px;color:#000;transform:scaleX(0.8700);transform-origin:0 0;">Value</div>
<div class="abs" style="left:682px;top:71px;width:1px;height:24px;background:#e5e5e5"></div>
<div class="abs" style="left:925px;top:71px;width:1px;height:24px;background:#e5e5e5"></div>
<div class="abs" style="left:440px;top:95px;width:486px;height:19px;background:#ffffff"></div><div class="abs" style="left:440px;top:114px;width:486px;height:1px;background:#d2d2d2"></div><svg class="ic" width="17" height="17" viewBox="0 0 17 17" style="left:442px;top:97px"><path d="M0.5 2.5 L2.5 0.5 L11.8 0.5 L15.5 4.2 L15.5 13.4 L13.6 15.7 L11.3 12.4 L9.6 14 L8 12.4 L6.4 14 L4.8 12.4 L3.2 14 L2 12.6 L0.5 14 Z" fill="url(#gab)" stroke="#bfae4c" stroke-width="1"/><path d="M11.8 0.8 L11.8 4.2 L15.2 4.2" fill="#fdfdf0" stroke="#bfae4c" stroke-width="0.9" stroke-linejoin="round"/><text x="2.1" y="11" font-family="Liberation Sans" font-size="9.2" fill="#332c00" letter-spacing="-0.2" stroke="#332c00" stroke-width="0.25">ab</text></svg><div class="t " style="left:462.00px;top:98.34px;font-size:12px;line-height:15px;letter-spacing:0.000px;color:#000;transform:scaleX(0.8684);transform-origin:0 0;">&gt;=== Dashboard Settings ===&lt;</div><div class="t " style="left:686.00px;top:98.34px;font-size:12px;line-height:15px;letter-spacing:0.000px;color:#000;transform:scaleX(0.8684);transform-origin:0 0;">&gt;=== Dashboard Settings ===&lt;</div><div class="abs" style="left:440px;top:115px;width:486px;height:19px;background:#ebebeb"></div><div class="abs" style="left:440px;top:134px;width:486px;height:1px;background:#d2d2d2"></div><svg class="ic" width="17" height="17" viewBox="0 0 17 17" style="left:442px;top:117px"><path d="M0.5 2.5 L2.5 0.5 L11.8 0.5 L15.5 4.2 L15.5 13.4 L13.6 15.7 L11.3 12.4 L9.6 14 L8 12.4 L6.4 14 L4.8 12.4 L3.2 14 L2 12.6 L0.5 14 Z" fill="url(#gab)" stroke="#bfae4c" stroke-width="1"/><path d="M11.8 0.8 L11.8 4.2 L15.2 4.2" fill="#fdfdf0" stroke="#bfae4c" stroke-width="0.9" stroke-linejoin="round"/><text x="2.1" y="11" font-family="Liberation Sans" font-size="9.2" fill="#332c00" letter-spacing="-0.2" stroke="#332c00" stroke-width="0.25">ab</text></svg><div class="t " style="left:462.00px;top:118.34px;font-size:12px;line-height:15px;letter-spacing:0.000px;color:#000;transform:scaleX(0.8700);transform-origin:0 0;">Symbols</div><div class="t " style="left:686.00px;top:118.34px;font-size:12px;line-height:15px;letter-spacing:0.000px;color:#000;transform:scaleX(0.9006);transform-origin:0 0;">EURUSD, GBPUSD, AUDUSD, USDCAD, US...</div><div class="abs" style="left:440px;top:135px;width:486px;height:19px;background:#ffffff"></div><div class="abs" style="left:440px;top:154px;width:486px;height:1px;background:#d2d2d2"></div><svg class="ic" width="17" height="17" viewBox="0 0 17 17" style="left:442px;top:137px"><path d="M0.5 2.5 L2.5 0.5 L11.8 0.5 L15.5 4.2 L15.5 13.4 L13.6 15.7 L11.3 12.4 L9.6 14 L8 12.4 L6.4 14 L4.8 12.4 L3.2 14 L2 12.6 L0.5 14 Z" fill="url(#gbool)" stroke="#46b046" stroke-width="1"/><path d="M11.8 0.8 L11.8 4.2 L15.2 4.2" fill="#fdfdf0" stroke="#46b046" stroke-width="0.9" stroke-linejoin="round"/><path d="M2.6 10 L7.6 5.6 M9.2 8.4 Q9.4 9.6 10.8 9.6 L12.9 9.6" stroke="#006a00" stroke-width="1.5" fill="none" stroke-linecap="round"/></svg><div class="t " style="left:462.00px;top:138.34px;font-size:12px;line-height:15px;letter-spacing:0.000px;color:#000;transform:scaleX(0.8700);transform-origin:0 0;">Is M1 Timeframe Enabled</div><div class="t " style="left:686.00px;top:138.34px;font-size:12px;line-height:15px;letter-spacing:0.000px;color:#000;transform:scaleX(0.8700);transform-origin:0 0;">false</div><div class="abs" style="left:440px;top:155px;width:486px;height:19px;background:#ebebeb"></div><div class="abs" style="left:440px;top:174px;width:486px;height:1px;background:#d2d2d2"></div><svg class="ic" width="17" height="17" viewBox="0 0 17 17" style="left:442px;top:157px"><path d="M0.5 2.5 L2.5 0.5 L11.8 0.5 L15.5 4.2 L15.5 13.4 L13.6 15.7 L11.3 12.4 L9.6 14 L8 12.4 L6.4 14 L4.8 12.4 L3.2 14 L2 12.6 L0.5 14 Z" fill="url(#gbool)" stroke="#46b046" stroke-width="1"/><path d="M11.8 0.8 L11.8 4.2 L15.2 4.2" fill="#fdfdf0" stroke="#46b046" stroke-width="0.9" stroke-linejoin="round"/><path d="M2.6 10 L7.6 5.6 M9.2 8.4 Q9.4 9.6 10.8 9.6 L12.9 9.6" stroke="#006a00" stroke-width="1.5" fill="none" stroke-linecap="round"/></svg><div class="t " style="left:462.00px;top:158.34px;font-size:12px;line-height:15px;letter-spacing:0.000px;color:#000;transform:scaleX(0.8700);transform-origin:0 0;">Is M5 Timeframe Enabled</div><div class="t " style="left:686.00px;top:158.34px;font-size:12px;line-height:15px;letter-spacing:0.000px;color:#000;transform:scaleX(0.8700);transform-origin:0 0;">true</div><div class="abs" style="left:440px;top:175px;width:486px;height:19px;background:#ffffff"></div><div class="abs" style="left:440px;top:194px;width:486px;height:1px;background:#d2d2d2"></div><svg class="ic" width="17" height="17" viewBox="0 0 17 17" style="left:442px;top:177px"><path d="M0.5 2.5 L2.5 0.5 L11.8 0.5 L15.5 4.2 L15.5 13.4 L13.6 15.7 L11.3 12.4 L9.6 14 L8 12.4 L6.4 14 L4.8 12.4 L3.2 14 L2 12.6 L0.5 14 Z" fill="url(#gbool)" stroke="#46b046" stroke-width="1"/><path d="M11.8 0.8 L11.8 4.2 L15.2 4.2" fill="#fdfdf0" stroke="#46b046" stroke-width="0.9" stroke-linejoin="round"/><path d="M2.6 10 L7.6 5.6 M9.2 8.4 Q9.4 9.6 10.8 9.6 L12.9 9.6" stroke="#006a00" stroke-width="1.5" fill="none" stroke-linecap="round"/></svg><div class="t " style="left:462.00px;top:178.34px;font-size:12px;line-height:15px;letter-spacing:0.000px;color:#000;transform:scaleX(0.8700);transform-origin:0 0;">Is M15 Timeframe Enabled</div><div class="t " style="left:686.00px;top:178.34px;font-size:12px;line-height:15px;letter-spacing:0.000px;color:#000;transform:scaleX(0.8700);transform-origin:0 0;">true</div><div class="abs" style="left:440px;top:195px;width:486px;height:19px;background:#ebebeb"></div><div class="abs" style="left:440px;top:214px;width:486px;height:1px;background:#d2d2d2"></div><svg class="ic" width="17" height="17" viewBox="0 0 17 17" style="left:442px;top:197px"><path d="M0.5 2.5 L2.5 0.5 L11.8 0.5 L15.5 4.2 L15.5 13.4 L13.6 15.7 L11.3 12.4 L9.6 14 L8 12.4 L6.4 14 L4.8 12.4 L3.2 14 L2 12.6 L0.5 14 Z" fill="url(#gbool)" stroke="#46b046" stroke-width="1"/><path d="M11.8 0.8 L11.8 4.2 L15.2 4.2" fill="#fdfdf0" stroke="#46b046" stroke-width="0.9" stroke-linejoin="round"/><path d="M2.6 10 L7.6 5.6 M9.2 8.4 Q9.4 9.6 10.8 9.6 L12.9 9.6" stroke="#006a00" stroke-width="1.5" fill="none" stroke-linecap="round"/></svg><div class="t " style="left:462.00px;top:198.34px;font-size:12px;line-height:15px;letter-spacing:0.000px;color:#000;transform:scaleX(0.8700);transform-origin:0 0;">Is M30 Timeframe Enabled</div><div class="t " style="left:686.00px;top:198.34px;font-size:12px;line-height:15px;letter-spacing:0.000px;color:#000;transform:scaleX(0.8700);transform-origin:0 0;">true</div><div class="abs" style="left:440px;top:215px;width:486px;height:19px;background:#ffffff"></div><div class="abs" style="left:440px;top:234px;width:486px;height:1px;background:#d2d2d2"></div><svg class="ic" width="17" height="17" viewBox="0 0 17 17" style="left:442px;top:217px"><path d="M0.5 2.5 L2.5 0.5 L11.8 0.5 L15.5 4.2 L15.5 13.4 L13.6 15.7 L11.3 12.4 L9.6 14 L8 12.4 L6.4 14 L4.8 12.4 L3.2 14 L2 12.6 L0.5 14 Z" fill="url(#gbool)" stroke="#46b046" stroke-width="1"/><path d="M11.8 0.8 L11.8 4.2 L15.2 4.2" fill="#fdfdf0" stroke="#46b046" stroke-width="0.9" stroke-linejoin="round"/><path d="M2.6 10 L7.6 5.6 M9.2 8.4 Q9.4 9.6 10.8 9.6 L12.9 9.6" stroke="#006a00" stroke-width="1.5" fill="none" stroke-linecap="round"/></svg><div class="t " style="left:462.00px;top:218.34px;font-size:12px;line-height:15px;letter-spacing:0.000px;color:#000;transform:scaleX(0.8700);transform-origin:0 0;">Is H1 Timeframe Enabled</div><div class="t " style="left:686.00px;top:218.34px;font-size:12px;line-height:15px;letter-spacing:0.000px;color:#000;transform:scaleX(0.8700);transform-origin:0 0;">true</div><div class="abs" style="left:440px;top:235px;width:486px;height:19px;background:#ebebeb"></div><div class="abs" style="left:440px;top:254px;width:486px;height:1px;background:#d2d2d2"></div><svg class="ic" width="17" height="17" viewBox="0 0 17 17" style="left:442px;top:237px"><path d="M0.5 2.5 L2.5 0.5 L11.8 0.5 L15.5 4.2 L15.5 13.4 L13.6 15.7 L11.3 12.4 L9.6 14 L8 12.4 L6.4 14 L4.8 12.4 L3.2 14 L2 12.6 L0.5 14 Z" fill="url(#gbool)" stroke="#46b046" stroke-width="1"/><path d="M11.8 0.8 L11.8 4.2 L15.2 4.2" fill="#fdfdf0" stroke="#46b046" stroke-width="0.9" stroke-linejoin="round"/><path d="M2.6 10 L7.6 5.6 M9.2 8.4 Q9.4 9.6 10.8 9.6 L12.9 9.6" stroke="#006a00" stroke-width="1.5" fill="none" stroke-linecap="round"/></svg><div class="t " style="left:462.00px;top:238.34px;font-size:12px;line-height:15px;letter-spacing:0.000px;color:#000;transform:scaleX(0.8700);transform-origin:0 0;">Is H4 Timeframe Enabled</div><div class="t " style="left:686.00px;top:238.34px;font-size:12px;line-height:15px;letter-spacing:0.000px;color:#000;transform:scaleX(0.8700);transform-origin:0 0;">true</div><div class="abs" style="left:440px;top:255px;width:486px;height:19px;background:#ffffff"></div><div class="abs" style="left:440px;top:274px;width:486px;height:1px;background:#d2d2d2"></div><svg class="ic" width="17" height="17" viewBox="0 0 17 17" style="left:442px;top:257px"><path d="M0.5 2.5 L2.5 0.5 L11.8 0.5 L15.5 4.2 L15.5 13.4 L13.6 15.7 L11.3 12.4 L9.6 14 L8 12.4 L6.4 14 L4.8 12.4 L3.2 14 L2 12.6 L0.5 14 Z" fill="url(#gbool)" stroke="#46b046" stroke-width="1"/><path d="M11.8 0.8 L11.8 4.2 L15.2 4.2" fill="#fdfdf0" stroke="#46b046" stroke-width="0.9" stroke-linejoin="round"/><path d="M2.6 10 L7.6 5.6 M9.2 8.4 Q9.4 9.6 10.8 9.6 L12.9 9.6" stroke="#006a00" stroke-width="1.5" fill="none" stroke-linecap="round"/></svg><div class="t " style="left:462.00px;top:258.34px;font-size:12px;line-height:15px;letter-spacing:0.000px;color:#000;transform:scaleX(0.8700);transform-origin:0 0;">Is D1 Timeframe Enabled</div><div class="t " style="left:686.00px;top:258.34px;font-size:12px;line-height:15px;letter-spacing:0.000px;color:#000;transform:scaleX(0.8700);transform-origin:0 0;">true</div><div class="abs" style="left:440px;top:275px;width:486px;height:19px;background:#ebebeb"></div><div class="abs" style="left:440px;top:294px;width:486px;height:1px;background:#d2d2d2"></div><svg class="ic" width="17" height="17" viewBox="0 0 17 17" style="left:442px;top:277px"><path d="M0.5 2.5 L2.5 0.5 L11.8 0.5 L15.5 4.2 L15.5 13.4 L13.6 15.7 L11.3 12.4 L9.6 14 L8 12.4 L6.4 14 L4.8 12.4 L3.2 14 L2 12.6 L0.5 14 Z" fill="url(#gbool)" stroke="#46b046" stroke-width="1"/><path d="M11.8 0.8 L11.8 4.2 L15.2 4.2" fill="#fdfdf0" stroke="#46b046" stroke-width="0.9" stroke-linejoin="round"/><path d="M2.6 10 L7.6 5.6 M9.2 8.4 Q9.4 9.6 10.8 9.6 L12.9 9.6" stroke="#006a00" stroke-width="1.5" fill="none" stroke-linecap="round"/></svg><div class="t " style="left:462.00px;top:278.34px;font-size:12px;line-height:15px;letter-spacing:0.000px;color:#000;transform:scaleX(0.8700);transform-origin:0 0;">Is W1 Timeframe Enabled</div><div class="t " style="left:686.00px;top:278.34px;font-size:12px;line-height:15px;letter-spacing:0.000px;color:#000;transform:scaleX(0.8700);transform-origin:0 0;">true</div><div class="abs" style="left:440px;top:295px;width:486px;height:19px;background:#ffffff"></div><div class="abs" style="left:440px;top:314px;width:486px;height:1px;background:#d2d2d2"></div><svg class="ic" width="17" height="17" viewBox="0 0 17 17" style="left:442px;top:297px"><path d="M0.5 2.5 L2.5 0.5 L11.8 0.5 L15.5 4.2 L15.5 13.4 L13.6 15.7 L11.3 12.4 L9.6 14 L8 12.4 L6.4 14 L4.8 12.4 L3.2 14 L2 12.6 L0.5 14 Z" fill="url(#gbool)" stroke="#46b046" stroke-width="1"/><path d="M11.8 0.8 L11.8 4.2 L15.2 4.2" fill="#fdfdf0" stroke="#46b046" stroke-width="0.9" stroke-linejoin="round"/><path d="M2.6 10 L7.6 5.6 M9.2 8.4 Q9.4 9.6 10.8 9.6 L12.9 9.6" stroke="#006a00" stroke-width="1.5" fill="none" stroke-linecap="round"/></svg><div class="t " style="left:462.00px;top:298.34px;font-size:12px;line-height:15px;letter-spacing:0.000px;color:#000;transform:scaleX(0.8700);transform-origin:0 0;">Is MN Timeframe Enabled</div><div class="t " style="left:686.00px;top:298.34px;font-size:12px;line-height:15px;letter-spacing:0.000px;color:#000;transform:scaleX(0.8700);transform-origin:0 0;">false</div><div class="abs" style="left:440px;top:315px;width:486px;height:19px;background:#ebebeb"></div><div class="abs" style="left:440px;top:334px;width:486px;height:1px;background:#d2d2d2"></div><svg class="ic" width="17" height="17" viewBox="0 0 17 17" style="left:442px;top:317px"><path d="M0.5 2.5 L2.5 0.5 L11.8 0.5 L15.5 4.2 L15.5 13.4 L13.6 15.7 L11.3 12.4 L9.6 14 L8 12.4 L6.4 14 L4.8 12.4 L3.2 14 L2 12.6 L0.5 14 Z" fill="url(#gnum)" stroke="#5f92c8" stroke-width="1"/><path d="M11.8 0.8 L11.8 4.2 L15.2 4.2" fill="#fdfdf0" stroke="#5f92c8" stroke-width="0.9" stroke-linejoin="round"/><text x="1.7" y="10.8" font-family="Liberation Sans" font-weight="bold" font-size="6.6" fill="#0a2a5a" letter-spacing="-0.5">123</text></svg><div class="t " style="left:462.00px;top:318.34px;font-size:12px;line-height:15px;letter-spacing:0.000px;color:#000;transform:scaleX(0.8700);transform-origin:0 0;">Sort By</div><div class="t " style="left:686.00px;top:318.34px;font-size:12px;line-height:15px;letter-spacing:0.000px;color:#000;transform:scaleX(0.8700);transform-origin:0 0;">Symbol</div><div class="abs" style="left:440px;top:335px;width:486px;height:19px;background:#ffffff"></div><div class="abs" style="left:440px;top:354px;width:486px;height:1px;background:#d2d2d2"></div><svg class="ic" width="17" height="17" viewBox="0 0 17 17" style="left:442px;top:337px"><path d="M0.5 2.5 L2.5 0.5 L11.8 0.5 L15.5 4.2 L15.5 13.4 L13.6 15.7 L11.3 12.4 L9.6 14 L8 12.4 L6.4 14 L4.8 12.4 L3.2 14 L2 12.6 L0.5 14 Z" fill="url(#gnum)" stroke="#5f92c8" stroke-width="1"/><path d="M11.8 0.8 L11.8 4.2 L15.2 4.2" fill="#fdfdf0" stroke="#5f92c8" stroke-width="0.9" stroke-linejoin="round"/><text x="1.7" y="10.8" font-family="Liberation Sans" font-weight="bold" font-size="6.6" fill="#0a2a5a" letter-spacing="-0.5">123</text></svg><div class="t " style="left:462.00px;top:338.34px;font-size:12px;line-height:15px;letter-spacing:0.000px;color:#000;transform:scaleX(0.8700);transform-origin:0 0;">Sort Type</div><div class="t " style="left:686.00px;top:338.34px;font-size:12px;line-height:15px;letter-spacing:0.000px;color:#000;transform:scaleX(0.8700);transform-origin:0 0;">Ascendent</div><div class="abs" style="left:440px;top:355px;width:486px;height:19px;background:#ebebeb"></div><div class="abs" style="left:440px;top:374px;width:486px;height:1px;background:#d2d2d2"></div><svg class="ic" width="17" height="17" viewBox="0 0 17 17" style="left:442px;top:357px"><path d="M0.5 2.5 L2.5 0.5 L11.8 0.5 L15.5 4.2 L15.5 13.4 L13.6 15.7 L11.3 12.4 L9.6 14 L8 12.4 L6.4 14 L4.8 12.4 L3.2 14 L2 12.6 L0.5 14 Z" fill="url(#gab)" stroke="#bfae4c" stroke-width="1"/><path d="M11.8 0.8 L11.8 4.2 L15.2 4.2" fill="#fdfdf0" stroke="#bfae4c" stroke-width="0.9" stroke-linejoin="round"/><text x="2.1" y="11" font-family="Liberation Sans" font-size="9.2" fill="#332c00" letter-spacing="-0.2" stroke="#332c00" stroke-width="0.25">ab</text></svg><div class="t " style="left:462.00px;top:358.34px;font-size:12px;line-height:15px;letter-spacing:0.000px;color:#000;transform:scaleX(0.8700);transform-origin:0 0;">General_</div><div class="t " style="left:686.00px;top:358.34px;font-size:12px;line-height:15px;letter-spacing:0.000px;color:#000;transform:scaleX(0.8700);transform-origin:0 0;">&gt;=== Indicator Settings ===&lt;</div><div class="abs" style="left:440px;top:375px;width:486px;height:19px;background:#ffffff"></div><div class="abs" style="left:440px;top:394px;width:486px;height:1px;background:#d2d2d2"></div><svg class="ic" width="17" height="17" viewBox="0 0 17 17" style="left:442px;top:377px"><path d="M0.5 2.5 L2.5 0.5 L11.8 0.5 L15.5 4.2 L15.5 13.4 L13.6 15.7 L11.3 12.4 L9.6 14 L8 12.4 L6.4 14 L4.8 12.4 L3.2 14 L2 12.6 L0.5 14 Z" fill="url(#ghalf)" stroke="#4ab0bd" stroke-width="1"/><path d="M11.8 0.8 L11.8 4.2 L15.2 4.2" fill="#fdfdf0" stroke="#4ab0bd" stroke-width="0.9" stroke-linejoin="round"/><text x="2" y="10.8" font-family="Liberation Sans" font-weight="bold" font-size="7.2" fill="#0b4a55" letter-spacing="-0.6">1/2</text></svg><div class="t " style="left:462.00px;top:378.34px;font-size:12px;line-height:15px;letter-spacing:0.000px;color:#000;transform:scaleX(0.8581);transform-origin:0 0;">Price Proximity Percent</div><div class="t " style="left:686.00px;top:378.34px;font-size:12px;line-height:15px;letter-spacing:0.000px;color:#000;transform:scaleX(0.8700);transform-origin:0 0;">15.0</div><div class="abs" style="left:440px;top:395px;width:486px;height:19px;background:#ebebeb"></div><div class="abs" style="left:440px;top:414px;width:486px;height:1px;background:#d2d2d2"></div><svg class="ic" width="17" height="17" viewBox="0 0 17 17" style="left:442px;top:397px"><path d="M0.5 2.5 L2.5 0.5 L11.8 0.5 L15.5 4.2 L15.5 13.4 L13.6 15.7 L11.3 12.4 L9.6 14 L8 12.4 L6.4 14 L4.8 12.4 L3.2 14 L2 12.6 L0.5 14 Z" fill="url(#gbool)" stroke="#46b046" stroke-width="1"/><path d="M11.8 0.8 L11.8 4.2 L15.2 4.2" fill="#fdfdf0" stroke="#46b046" stroke-width="0.9" stroke-linejoin="round"/><path d="M2.6 10 L7.6 5.6 M9.2 8.4 Q9.4 9.6 10.8 9.6 L12.9 9.6" stroke="#006a00" stroke-width="1.5" fill="none" stroke-linecap="round"/></svg><div class="t " style="left:462.00px;top:398.34px;font-size:12px;line-height:15px;letter-spacing:0.000px;color:#000;transform:scaleX(0.8564);transform-origin:0 0;">Fill Patterns with Color</div><div class="t " style="left:686.00px;top:398.34px;font-size:12px;line-height:15px;letter-spacing:0.000px;color:#000;transform:scaleX(0.8700);transform-origin:0 0;">true</div><div class="abs" style="left:440px;top:415px;width:486px;height:19px;background:#ffffff"></div><div class="abs" style="left:440px;top:434px;width:486px;height:1px;background:#d2d2d2"></div><svg class="ic" width="17" height="17" viewBox="0 0 17 17" style="left:442px;top:417px"><path d="M0.5 2.5 L2.5 0.5 L11.8 0.5 L15.5 4.2 L15.5 13.4 L13.6 15.7 L11.3 12.4 L9.6 14 L8 12.4 L6.4 14 L4.8 12.4 L3.2 14 L2 12.6 L0.5 14 Z" fill="url(#gbool)" stroke="#46b046" stroke-width="1"/><path d="M11.8 0.8 L11.8 4.2 L15.2 4.2" fill="#fdfdf0" stroke="#46b046" stroke-width="0.9" stroke-linejoin="round"/><path d="M2.6 10 L7.6 5.6 M9.2 8.4 Q9.4 9.6 10.8 9.6 L12.9 9.6" stroke="#006a00" stroke-width="1.5" fill="none" stroke-linecap="round"/></svg><div class="t " style="left:462.00px;top:418.34px;font-size:12px;line-height:15px;letter-spacing:0.000px;color:#000;transform:scaleX(0.8830);transform-origin:0 0;">Display Head and Shoulder</div><div class="t " style="left:686.00px;top:418.34px;font-size:12px;line-height:15px;letter-spacing:0.000px;color:#000;transform:scaleX(0.8700);transform-origin:0 0;">true</div><div class="abs" style="left:440px;top:435px;width:486px;height:19px;background:#ebebeb"></div><div class="abs" style="left:440px;top:454px;width:486px;height:1px;background:#d2d2d2"></div><svg class="ic" width="17" height="17" viewBox="0 0 17 17" style="left:442px;top:437px"><path d="M0.5 2.5 L2.5 0.5 L11.8 0.5 L15.5 4.2 L15.5 13.4 L13.6 15.7 L11.3 12.4 L9.6 14 L8 12.4 L6.4 14 L4.8 12.4 L3.2 14 L2 12.6 L0.5 14 Z" fill="url(#gbool)" stroke="#46b046" stroke-width="1"/><path d="M11.8 0.8 L11.8 4.2 L15.2 4.2" fill="#fdfdf0" stroke="#46b046" stroke-width="0.9" stroke-linejoin="round"/><path d="M2.6 10 L7.6 5.6 M9.2 8.4 Q9.4 9.6 10.8 9.6 L12.9 9.6" stroke="#006a00" stroke-width="1.5" fill="none" stroke-linecap="round"/></svg><div class="t " style="left:462.00px;top:438.34px;font-size:12px;line-height:15px;letter-spacing:0.000px;color:#000;transform:scaleX(0.8809);transform-origin:0 0;">Display Reverse Head and Shoulder Pattern</div><div class="t " style="left:686.00px;top:438.34px;font-size:12px;line-height:15px;letter-spacing:0.000px;color:#000;transform:scaleX(0.8700);transform-origin:0 0;">true</div><div class="abs" style="left:440px;top:455px;width:486px;height:19px;background:#ffffff"></div><div class="abs" style="left:440px;top:474px;width:486px;height:1px;background:#d2d2d2"></div><svg class="ic" width="17" height="17" viewBox="0 0 17 17" style="left:442px;top:457px"><path d="M0.5 2.5 L2.5 0.5 L11.8 0.5 L15.5 4.2 L15.5 13.4 L13.6 15.7 L11.3 12.4 L9.6 14 L8 12.4 L6.4 14 L4.8 12.4 L3.2 14 L2 12.6 L0.5 14 Z" fill="url(#gbool)" stroke="#46b046" stroke-width="1"/><path d="M11.8 0.8 L11.8 4.2 L15.2 4.2" fill="#fdfdf0" stroke="#46b046" stroke-width="0.9" stroke-linejoin="round"/><path d="M2.6 10 L7.6 5.6 M9.2 8.4 Q9.4 9.6 10.8 9.6 L12.9 9.6" stroke="#006a00" stroke-width="1.5" fill="none" stroke-linecap="round"/></svg><div class="t " style="left:462.00px;top:458.34px;font-size:12px;line-height:15px;letter-spacing:0.000px;color:#000;transform:scaleX(0.8700);transform-origin:0 0;">Display Double Top Pattern</div><div class="t " style="left:686.00px;top:458.34px;font-size:12px;line-height:15px;letter-spacing:0.000px;color:#000;transform:scaleX(0.8700);transform-origin:0 0;">true</div><div class="abs" style="left:440px;top:475px;width:486px;height:19px;background:#ebebeb"></div><div class="abs" style="left:440px;top:494px;width:486px;height:1px;background:#d2d2d2"></div><svg class="ic" width="17" height="17" viewBox="0 0 17 17" style="left:442px;top:477px"><path d="M0.5 2.5 L2.5 0.5 L11.8 0.5 L15.5 4.2 L15.5 13.4 L13.6 15.7 L11.3 12.4 L9.6 14 L8 12.4 L6.4 14 L4.8 12.4 L3.2 14 L2 12.6 L0.5 14 Z" fill="url(#gbool)" stroke="#46b046" stroke-width="1"/><path d="M11.8 0.8 L11.8 4.2 L15.2 4.2" fill="#fdfdf0" stroke="#46b046" stroke-width="0.9" stroke-linejoin="round"/><path d="M2.6 10 L7.6 5.6 M9.2 8.4 Q9.4 9.6 10.8 9.6 L12.9 9.6" stroke="#006a00" stroke-width="1.5" fill="none" stroke-linecap="round"/></svg><div class="t " style="left:462.00px;top:478.34px;font-size:12px;line-height:15px;letter-spacing:0.000px;color:#000;transform:scaleX(0.8700);transform-origin:0 0;">Display Double Bottom Pattern</div><div class="t " style="left:686.00px;top:478.34px;font-size:12px;line-height:15px;letter-spacing:0.000px;color:#000;transform:scaleX(0.8700);transform-origin:0 0;">true</div><div class="abs" style="left:440px;top:495px;width:486px;height:19px;background:#ffffff"></div><div class="abs" style="left:440px;top:514px;width:486px;height:1px;background:#d2d2d2"></div><svg class="ic" width="17" height="17" viewBox="0 0 17 17" style="left:442px;top:497px"><path d="M0.5 2.5 L2.5 0.5 L11.8 0.5 L15.5 4.2 L15.5 13.4 L13.6 15.7 L11.3 12.4 L9.6 14 L8 12.4 L6.4 14 L4.8 12.4 L3.2 14 L2 12.6 L0.5 14 Z" fill="url(#gbool)" stroke="#46b046" stroke-width="1"/><path d="M11.8 0.8 L11.8 4.2 L15.2 4.2" fill="#fdfdf0" stroke="#46b046" stroke-width="0.9" stroke-linejoin="round"/><path d="M2.6 10 L7.6 5.6 M9.2 8.4 Q9.4 9.6 10.8 9.6 L12.9 9.6" stroke="#006a00" stroke-width="1.5" fill="none" stroke-linecap="round"/></svg><div class="t " style="left:462.00px;top:498.34px;font-size:12px;line-height:15px;letter-spacing:0.000px;color:#000;transform:scaleX(0.8700);transform-origin:0 0;">Display Triple Top Pattern</div><div class="t " style="left:686.00px;top:498.34px;font-size:12px;line-height:15px;letter-spacing:0.000px;color:#000;transform:scaleX(0.8700);transform-origin:0 0;">true</div><div class="abs" style="left:440px;top:515px;width:486px;height:19px;background:#ebebeb"></div><div class="abs" style="left:440px;top:534px;width:486px;height:1px;background:#d2d2d2"></div><svg class="ic" width="17" height="17" viewBox="0 0 17 17" style="left:442px;top:517px"><path d="M0.5 2.5 L2.5 0.5 L11.8 0.5 L15.5 4.2 L15.5 13.4 L13.6 15.7 L11.3 12.4 L9.6 14 L8 12.4 L6.4 14 L4.8 12.4 L3.2 14 L2 12.6 L0.5 14 Z" fill="url(#gbool)" stroke="#46b046" stroke-width="1"/><path d="M11.8 0.8 L11.8 4.2 L15.2 4.2" fill="#fdfdf0" stroke="#46b046" stroke-width="0.9" stroke-linejoin="round"/><path d="M2.6 10 L7.6 5.6 M9.2 8.4 Q9.4 9.6 10.8 9.6 L12.9 9.6" stroke="#006a00" stroke-width="1.5" fill="none" stroke-linecap="round"/></svg><div class="t " style="left:462.00px;top:518.34px;font-size:12px;line-height:15px;letter-spacing:0.000px;color:#000;transform:scaleX(0.8700);transform-origin:0 0;">Display Triple Bottom Pattern</div><div class="t " style="left:686.00px;top:518.34px;font-size:12px;line-height:15px;letter-spacing:0.000px;color:#000;transform:scaleX(0.8700);transform-origin:0 0;">true</div><div class="abs" style="left:440px;top:535px;width:486px;height:19px;background:#ffffff"></div><div class="abs" style="left:440px;top:554px;width:486px;height:1px;background:#d2d2d2"></div><svg class="ic" width="17" height="17" viewBox="0 0 17 17" style="left:442px;top:537px"><path d="M0.5 2.5 L2.5 0.5 L11.8 0.5 L15.5 4.2 L15.5 13.4 L13.6 15.7 L11.3 12.4 L9.6 14 L8 12.4 L6.4 14 L4.8 12.4 L3.2 14 L2 12.6 L0.5 14 Z" fill="url(#gbool)" stroke="#46b046" stroke-width="1"/><path d="M11.8 0.8 L11.8 4.2 L15.2 4.2" fill="#fdfdf0" stroke="#46b046" stroke-width="0.9" stroke-linejoin="round"/><path d="M2.6 10 L7.6 5.6 M9.2 8.4 Q9.4 9.6 10.8 9.6 L12.9 9.6" stroke="#006a00" stroke-width="1.5" fill="none" stroke-linecap="round"/></svg><div class="t " style="left:462.00px;top:538.34px;font-size:12px;line-height:15px;letter-spacing:0.000px;color:#000;transform:scaleX(0.8700);transform-origin:0 0;">Display Triangle Pattern</div><div class="t " style="left:686.00px;top:538.34px;font-size:12px;line-height:15px;letter-spacing:0.000px;color:#000;transform:scaleX(0.8700);transform-origin:0 0;">true</div><div class="abs" style="left:440px;top:555px;width:486px;height:19px;background:#ebebeb"></div><div class="abs" style="left:440px;top:574px;width:486px;height:1px;background:#d2d2d2"></div><svg class="ic" width="17" height="17" viewBox="0 0 17 17" style="left:442px;top:557px"><path d="M0.5 2.5 L2.5 0.5 L11.8 0.5 L15.5 4.2 L15.5 13.4 L13.6 15.7 L11.3 12.4 L9.6 14 L8 12.4 L6.4 14 L4.8 12.4 L3.2 14 L2 12.6 L0.5 14 Z" fill="url(#gbool)" stroke="#46b046" stroke-width="1"/><path d="M11.8 0.8 L11.8 4.2 L15.2 4.2" fill="#fdfdf0" stroke="#46b046" stroke-width="0.9" stroke-linejoin="round"/><path d="M2.6 10 L7.6 5.6 M9.2 8.4 Q9.4 9.6 10.8 9.6 L12.9 9.6" stroke="#006a00" stroke-width="1.5" fill="none" stroke-linecap="round"/></svg><div class="t " style="left:462.00px;top:558.34px;font-size:12px;line-height:15px;letter-spacing:0.000px;color:#000;transform:scaleX(0.8700);transform-origin:0 0;">Display Rising Wedge Pattern</div><div class="t " style="left:686.00px;top:558.34px;font-size:12px;line-height:15px;letter-spacing:0.000px;color:#000;transform:scaleX(0.8700);transform-origin:0 0;">true</div><div class="abs" style="left:440px;top:575px;width:486px;height:19px;background:#ffffff"></div><svg class="ic" width="17" height="17" viewBox="0 0 17 17" style="left:442px;top:577px"><path d="M0.5 2.5 L2.5 0.5 L11.8 0.5 L15.5 4.2 L15.5 13.4 L13.6 15.7 L11.3 12.4 L9.6 14 L8 12.4 L6.4 14 L4.8 12.4 L3.2 14 L2 12.6 L0.5 14 Z" fill="url(#gbool)" stroke="#46b046" stroke-width="1"/><path d="M11.8 0.8 L11.8 4.2 L15.2 4.2" fill="#fdfdf0" stroke="#46b046" stroke-width="0.9" stroke-linejoin="round"/><path d="M2.6 10 L7.6 5.6 M9.2 8.4 Q9.4 9.6 10.8 9.6 L12.9 9.6" stroke="#006a00" stroke-width="1.5" fill="none" stroke-linecap="round"/></svg><div class="t " style="left:462.00px;top:578.34px;font-size:12px;line-height:15px;letter-spacing:0.000px;color:#000;transform:scaleX(0.8700);transform-origin:0 0;">Display Falling Wedge Pattern</div><div class="t " style="left:686.00px;top:578.34px;font-size:12px;line-height:15px;letter-spacing:0.000px;color:#000;transform:scaleX(0.8700);transform-origin:0 0;">true</div>
<div class="abs" style="left:682px;top:95px;width:1px;height:499px;background:#d0d0d0"></div>
<div class="abs" style="left:927px;top:71px;width:16px;height:523px;background:#f0f0f0"></div>
<div class="abs" style="left:927px;top:88px;width:15px;height:255px;background:#cdcdcd"></div>
<svg class="abs" style="left:930px;top:76px" width="9" height="8"><path d="M1 6.5 L4.5 3 L8 6.5" stroke="#505050" stroke-width="1.9" fill="none"/></svg>
<svg class="abs" style="left:930px;top:581px" width="9" height="8"><path d="M1 1.5 L4.5 5 L8 1.5" stroke="#505050" stroke-width="1.9" fill="none"/></svg>
<!-- buttons -->
<div class="abs" style="left:953px;top:540px;width:101px;height:19px;border:1px solid #adadad;background:#e1e1e1"></div>
<div class="t " style="left:993.00px;top:544.02px;font-size:11.5px;line-height:14px;letter-spacing:0.000px;color:#000;transform:scaleX(0.8599);transform-origin:0 0;">Load</div>
<div class="abs" style="left:953px;top:573px;width:101px;height:19px;border:1px solid #adadad;background:#e1e1e1"></div>
<div class="t " style="left:992.50px;top:577.02px;font-size:11.5px;line-height:14px;letter-spacing:0.000px;color:#000;transform:scaleX(0.9156);transform-origin:0 0;">Save</div>
<div class="abs" style="left:829px;top:611px;width:69px;height:17px;border:2px solid #0078d7;background:#e1e1e1"></div>
<div class="t " style="left:857.00px;top:615.02px;font-size:11.5px;line-height:14px;letter-spacing:0.000px;color:#000;transform:scaleX(0.9329);transform-origin:0 0;">OK</div>
<div class="abs" style="left:910px;top:611px;width:71px;height:19px;border:1px solid #adadad;background:#e1e1e1"></div>
<div class="t " style="left:929.50px;top:615.02px;font-size:11.5px;line-height:14px;letter-spacing:0.000px;color:#000;transform:scaleX(0.9219);transform-origin:0 0;">Cancel</div>
<div class="abs" style="left:991px;top:611px;width:71px;height:19px;border:1px solid #adadad;background:#e1e1e1"></div>
<div class="t " style="left:1013.00px;top:615.02px;font-size:11.5px;line-height:14px;letter-spacing:0.000px;color:#000;transform:scaleX(0.8988);transform-origin:0 0;">Reset</div>
<div class="abs" style="left:1068px;top:631px;width:2px;height:2px;background:#b8b8b8"></div><div class="abs" style="left:1065px;top:634px;width:2px;height:2px;background:#b8b8b8"></div><div class="abs" style="left:1068px;top:634px;width:2px;height:2px;background:#b8b8b8"></div><div class="abs" style="left:1062px;top:637px;width:2px;height:2px;background:#b8b8b8"></div><div class="abs" style="left:1065px;top:637px;width:2px;height:2px;background:#b8b8b8"></div><div class="abs" style="left:1068px;top:637px;width:2px;height:2px;background:#b8b8b8"></div>
</body></html>
